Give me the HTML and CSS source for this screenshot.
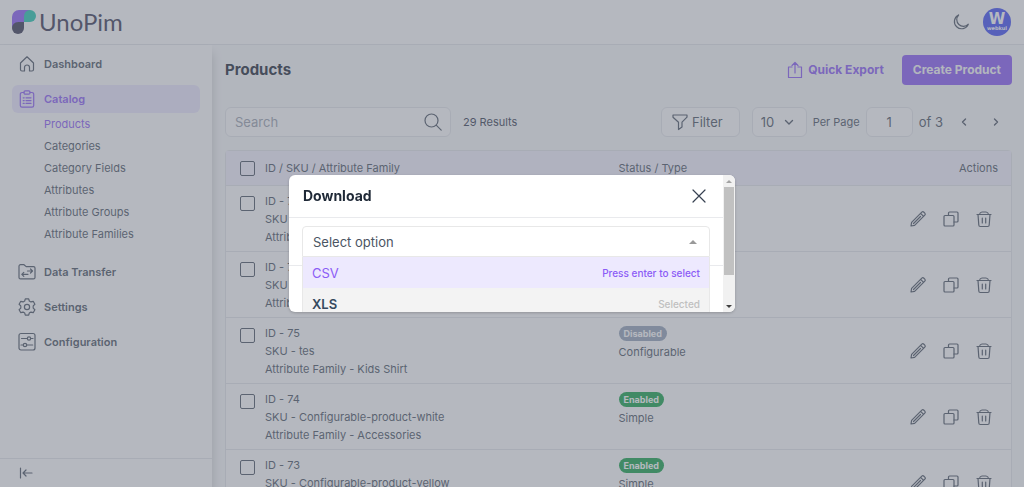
FILE: index.html
```html
<!DOCTYPE html>
<html lang="en">
<head>
<meta charset="utf-8">
<title>Products - UnoPim</title>
<link rel="stylesheet" href="styles.css">
</head>
<body>
<svg class="sprite" aria-hidden="true">
  <symbol id="i-pencil" viewBox="0 0 20 20"><path d="M3 17l.6-3.600L13.800 3.200a1.500 1.500 0 0 1 2.100 0l.9.9a1.500 1.500 0 0 1 0 2.100L6.600 16.400z M12.600 4.400l3 3M5.500 14.500l7-7"/></symbol>
  <symbol id="i-copy" viewBox="0 0 20 20"><rect x="3" y="6.500" width="10" height="10.500" rx="1"/><path d="M7.500 6.500V4a1 1 0 0 1 1-1H16a1 1 0 0 1 1 1v8a1 1 0 0 1-1 1h-3"/></symbol>
  <symbol id="i-trash" viewBox="0 0 20 20"><path d="M3 5.500h14M5.500 5.500a2.800 2.800 0 0 1 2.500-2.500h4a2.800 2.800 0 0 1 2.500 2.500M4 5.500l.8 10.500a1.500 1.500 0 0 0 1.500 1.500h7.400a1.500 1.500 0 0 0 1.500-1.500L16 5.500M8.300 9v5M11.700 9v5"/></symbol>
</svg>

<header class="topbar">
  <a class="brand" href="#">
    <svg class="brand-mark" viewBox="0 0 24 24" aria-hidden="true">
      <path fill="#8b5cf6" d="M0 18V7a7 7 0 0 1 7-7h11v6h-6v6H6z"/>
      <path fill="#25c8b0" d="M12 12V6a6 6 0 1 1 6 6z"/>
      <path fill="#3b3a55" d="M0 18a6 6 0 0 1 6-6h6v6a6 6 0 0 1-12 0z"/>
    </svg>
    <span class="brand-name">UnoPim</span>
  </a>
  <div class="topbar-tools">
    <button class="icon-btn" aria-label="Dark mode">
      <svg class="icon" viewBox="0 0 20 20"><path d="M7.600 3A7.200 7.200 0 1 0 17.300 12.200 6.300 6.300 0 0 1 7.600 3z"/></svg>
    </button>
    <button class="avatar" aria-label="Account"><span class="avatar-mark">W</span><span class="avatar-name">webkul</span></button>
  </div>
</header>

<div class="shell">
  <aside class="sidebar">
    <nav class="menu">
      <a class="menu-item" href="#">
        <svg class="icon" viewBox="0 0 20 20"><path d="M3.500 9L10 2.800 16.500 9v6.500a1.500 1.500 0 0 1-1.500 1.500h-2.500v-3.500a2.500 2.500 0 0 0-5 0V17H5a1.500 1.500 0 0 1-1.500-1.500z"/></svg>
        Dashboard</a>
      <a class="menu-item active" href="#">
        <svg class="icon" viewBox="0 0 20 20"><path d="M7 3.500H5a1.700 1.700 0 0 0-1.700 1.700v11.300A1.700 1.700 0 0 0 5 18.200h10a1.700 1.700 0 0 0 1.700-1.700V5.200A1.700 1.700 0 0 0 15 3.500h-2"/><rect x="7" y="1.800" width="6" height="3.400" rx="1.200"/><path d="M6.200 8.800h1M9 8.800h5M6.200 11.600h1M9 11.600h5M6.200 14.400h1M9 14.400h5"/></svg>
        Catalog</a>
      <div class="submenu">
        <a class="current" href="#">Products</a>
        <a href="#">Categories</a>
        <a href="#">Category Fields</a>
        <a href="#">Attributes</a>
        <a href="#">Attribute Groups</a>
        <a href="#">Attribute Families</a>
      </div>
      <a class="menu-item" href="#">
        <svg class="icon" viewBox="0 0 20 20"><path d="M2 4.200A1.500 1.500 0 0 1 3.500 2.700H7l2.200 1.900h7.300A1.500 1.500 0 0 1 18 6.100v9.300a1.500 1.500 0 0 1-1.500 1.500h-13A1.500 1.500 0 0 1 2 15.400zM10.500 9h5M13.500 7l2 2-2 2M11 12.300H4.800M6.800 10.300l-2 2 2 2"/></svg>
        Data Transfer</a>
      <a class="menu-item" href="#">
        <svg class="icon" viewBox="0 0 20 20"><circle cx="10" cy="10" r="2.600"/><path d="M8.300 1.800h3.400l.6 2.200 1.600.9 2.300-.6 1.700 3-1.700 1.600v2.200l1.700 1.600-1.700 3-2.300-.6-1.600.9-.6 2.200H8.300L7.700 16l-1.600-.9-2.300.6-1.700-3 1.700-1.600V8.900L2.100 7.300l1.700-3 2.300.6L7.700 4z"/></svg>
        Settings</a>
      <a class="menu-item" href="#">
        <svg class="icon" viewBox="0 0 20 20"><rect x="2" y="1.500" width="16" height="16.500" rx="2"/><circle cx="12" cy="6.500" r="1.700"/><circle cx="8" cy="13" r="1.700"/><path d="M4.500 6.500h5.800M13.700 6.500h2.300M4 13h2.300M9.700 13h6"/></svg>
        Configuration</a>
    </nav>
    <div class="sidebar-foot">
      <button class="icon-btn" aria-label="Collapse menu">
        <svg class="icon" viewBox="0 0 20 20"><path d="M4.500 5v10M16 10H7M10 7l-3 3 3 3"/></svg>
      </button>
    </div>
  </aside>

  <main class="content">
    <div class="page-head">
      <h1>Products</h1>
      <div class="page-actions">
        <button class="link-btn">
          <svg class="icon" viewBox="0 0 20 20"><path d="M7 7H3.500v10.500h13V7H13M10 13V2.500M7 5.500l3-3 3 3"/></svg>
          Quick Export</button>
        <button class="primary-btn">Create Product</button>
      </div>
    </div>

    <div class="toolbar">
      <div class="toolbar-side">
        <label class="search">
          <input type="text" placeholder="Search" aria-label="Search">
          <svg class="icon" viewBox="0 0 20 20"><circle cx="8.500" cy="8.500" r="6.500"/><path d="M13.200 13.200l5 5"/></svg>
        </label>
        <span class="results">29 Results</span>
      </div>
      <div class="toolbar-side pager">
        <button class="box-btn filter">
          <svg class="icon" viewBox="0 0 20 20"><path d="M3 3h14v2.200l-5 5V15l-3.500 2.500V10.200L3 5.200z"/></svg>
          Filter</button>
        <span class="per-page">
          <select aria-label="Rows per page" id="rows"><option>10</option></select>
          <svg class="icon small" viewBox="0 0 12 12"><path d="M2.500 4.500L6 8l3.500-3.500"/></svg>
        </span>
        <label class="muted" for="rows">Per Page</label>
        <input class="page-no" type="text" value="1" aria-label="Page">
        <span class="total">of 3</span>
        <button class="icon-btn prev" aria-label="Previous page"><svg class="icon small" viewBox="0 0 12 12"><path d="M7.500 3L4.500 6l3 3"/></svg></button>
        <button class="icon-btn next" aria-label="Next page"><svg class="icon small" viewBox="0 0 12 12"><path d="M4.500 3l3 3-3 3"/></svg></button>
      </div>
    </div>

    <table class="grid">
      <thead>
        <tr>
          <th><div class="entry"><input type="checkbox" aria-label="Select all"><span>ID / SKU / Attribute Family</span></div></th>
          <th>Status / Type</th>
          <th class="actions-head">Actions</th>
        </tr>
      </thead>
      <tbody>
        <tr>
          <td><div class="entry"><input type="checkbox" aria-label="Select 77"><div><p>ID - 77</p><p>SKU</p><p>Attribute</p></div></div></td>
          <td></td>
          <td><div class="actions"><button aria-label="Edit"><svg class="icon"><use href="#i-pencil"/></svg></button><button aria-label="Copy"><svg class="icon"><use href="#i-copy"/></svg></button><button aria-label="Delete"><svg class="icon"><use href="#i-trash"/></svg></button></div></td>
        </tr>
        <tr>
          <td><div class="entry"><input type="checkbox" aria-label="Select 76"><div><p>ID - 76</p><p>SKU</p><p>Attribute</p></div></div></td>
          <td></td>
          <td><div class="actions"><button aria-label="Edit"><svg class="icon"><use href="#i-pencil"/></svg></button><button aria-label="Copy"><svg class="icon"><use href="#i-copy"/></svg></button><button aria-label="Delete"><svg class="icon"><use href="#i-trash"/></svg></button></div></td>
        </tr>
        <tr>
          <td><div class="entry"><input type="checkbox" aria-label="Select 75"><div><p>ID - 75</p><p>SKU - tes</p><p>Attribute Family - Kids Shirt</p></div></div></td>
          <td><span class="badge off">Disabled</span><p>Configurable</p></td>
          <td><div class="actions"><button aria-label="Edit"><svg class="icon"><use href="#i-pencil"/></svg></button><button aria-label="Copy"><svg class="icon"><use href="#i-copy"/></svg></button><button aria-label="Delete"><svg class="icon"><use href="#i-trash"/></svg></button></div></td>
        </tr>
        <tr>
          <td><div class="entry"><input type="checkbox" aria-label="Select 74"><div><p>ID - 74</p><p>SKU - Configurable-product-white</p><p>Attribute Family - Accessories</p></div></div></td>
          <td><span class="badge on">Enabled</span><p>Simple</p></td>
          <td><div class="actions"><button aria-label="Edit"><svg class="icon"><use href="#i-pencil"/></svg></button><button aria-label="Copy"><svg class="icon"><use href="#i-copy"/></svg></button><button aria-label="Delete"><svg class="icon"><use href="#i-trash"/></svg></button></div></td>
        </tr>
        <tr>
          <td><div class="entry"><input type="checkbox" aria-label="Select 73"><div><p>ID - 73</p><p>SKU - Configurable-product-yellow</p></div></div></td>
          <td><span class="badge on">Enabled</span><p>Simple</p></td>
          <td><div class="actions"><button aria-label="Edit"><svg class="icon"><use href="#i-pencil"/></svg></button><button aria-label="Copy"><svg class="icon"><use href="#i-copy"/></svg></button><button aria-label="Delete"><svg class="icon"><use href="#i-trash"/></svg></button></div></td>
        </tr>
      </tbody>
    </table>
  </main>
</div>

<div class="overlay">
  <section class="modal" role="dialog" aria-labelledby="modal-title">
    <div class="modal-scroll">
      <div class="modal-head">
        <h2 id="modal-title">Download</h2>
        <button class="icon-btn close" aria-label="Close"><svg class="icon" viewBox="0 0 20 20"><path d="M4 4l12 12M16 4L4 16"/></svg></button>
      </div>
      <div class="modal-body">
        <div class="picker">
          <button class="picker-toggle" aria-haspopup="listbox" aria-expanded="true">Select option<span class="caret"></span></button>
          <ul class="picker-list" role="listbox">
            <li class="hover" role="option"><span>CSV</span><small>Press enter to select</small></li>
            <li class="selected" role="option" aria-selected="true"><span>XLS</span><small>Selected</small></li>
          </ul>
        </div>
      </div>
    </div>
    <div class="scrollbar" aria-hidden="true">
      <span class="arrow up"></span>
      <span class="track"><span class="thumb"></span></span>
      <span class="arrow down"></span>
    </div>
  </section>
</div>
</body>
</html>
```

FILE: styles.css
```css
* { box-sizing: border-box; }

body {
  margin: 0;
  height: 100vh;
  display: flex;
  flex-direction: column;
  overflow: hidden;
  font: 11px/18px Inter, "Liberation Sans", sans-serif;
  color: #4b5563;
  background: #f9fafb;
}

h1, h2, p, ul { margin: 0; padding: 0; }
a { color: inherit; text-decoration: none; }
button, input, select { font: inherit; color: inherit; }
button { padding: 0; border: 0; background: none; }

.sprite { display: none; }

.icon {
  width: 20px;
  height: 20px;
  flex: none;
  fill: none;
  stroke: currentColor;
  stroke-width: 1.2;
  stroke-linecap: round;
  stroke-linejoin: round;
}
.icon.small { width: 12px; height: 12px; stroke-width: 1.4; }
.icon-btn { display: flex; }

/* Top bar */
.topbar {
  flex: none;
  height: 45px;
  padding: 0 13px 0 12px;
  display: flex;
  align-items: center;
  justify-content: space-between;
  background: #fff;
  border-bottom: 1px solid #e5e7eb;
}
.brand { display: flex; align-items: center; gap: 3px; }
.brand-mark { width: 24px; height: 24px; }
.brand-name { font: 24px/30px Lato, sans-serif; color: #3b3a55; }
.topbar-tools { display: flex; align-items: center; gap: 12px; }
.avatar {
  width: 28px;
  height: 28px;
  border-radius: 50%;
  display: flex;
  flex-direction: column;
  align-items: center;
  justify-content: center;
  background: #4250f5;
  color: #fff;
}
.avatar-mark { font: bold 15px/13px "DejaVu Sans", sans-serif; }
.avatar-name { font: bold 5px/5px "DejaVu Sans", sans-serif; }

/* Layout */
.shell { flex: 1; min-height: 0; display: flex; }
.sidebar {
  flex: none;
  width: 212px;
  display: flex;
  flex-direction: column;
  background: #fff;
  box-shadow: 0 8px 10px rgba(0, 0, 0, .2);
}
.menu {
  flex: 1;
  padding: 5px 12px;
  display: flex;
  flex-direction: column;
  gap: 7px;
}
.menu-item {
  height: 28px;
  padding: 0 5px;
  display: flex;
  align-items: center;
  gap: 7px;
  border-radius: 6px;
  font-weight: 600;
}
.menu-item.active { background: #ede9fe; color: #8b5cf6; }
.submenu {
  margin-top: -7px;
  padding: 0 0 6px 32px;
  display: flex;
  flex-direction: column;
  line-height: 22px;
}
.submenu .current { color: #8b5cf6; }
.sidebar-foot {
  height: 29px;
  padding: 0 16px;
  display: flex;
  align-items: center;
  border-top: 1px solid #e5e7eb;
}

.content { flex: 1; min-width: 0; padding: 10px 12px 0 13px; overflow: hidden; }
.page-head, .toolbar {
  height: 30px;
  display: flex;
  align-items: center;
  justify-content: space-between;
}
h1 { font-size: 15px; line-height: 24px; font-weight: 700; color: #1f2937; }
.page-actions { display: flex; align-items: center; gap: 18px; font-size: 12px; }
.link-btn {
  display: flex;
  align-items: center;
  gap: 3px;
  font-weight: 700;
  color: #8b5cf6;
}
.primary-btn {
  height: 30px;
  padding: 0 11px;
  border-radius: 4px;
  background: #8b5cf6;
  color: #f9fafb;
  font-weight: 700;
}

.toolbar { margin: 22px 0 13px; }
.toolbar-side { display: flex; align-items: center; gap: 12px; }
.search, .box-btn, .per-page, .page-no {
  height: 30px;
  border: 1px solid #e5e7eb;
  border-radius: 6px;
  background: #fff;
}
.search {
  width: 226px;
  padding: 0 7px 0 9px;
  display: flex;
  align-items: center;
}
.search input {
  flex: 1;
  min-width: 0;
  padding: 0;
  border: 0;
  outline: 0;
  background: none;
  font-size: 13px;
}
.search input::placeholder { color: #9ca3af; opacity: 1; }
.results { color: #374151; }
.toolbar .pager { font-size: 13px; gap: 6px; }
.box-btn { display: flex; align-items: center; gap: 2px; }
.filter { padding: 0 16px 0 8px; margin-right: 6px; }
.per-page {
  padding: 0 11px 0 8px;
  display: flex;
  align-items: center;
  gap: 8px;
}
.per-page select {
  appearance: none;
  padding: 0;
  border: 0;
  background: none;
}
.muted { font-size: 11px; }
.page-no { width: 47px; padding: 0; text-align: center; }
.prev { margin: 0 14px 0 9px; }
.next { margin-right: 10px; }

/* Table */
.grid {
  width: 100%;
  table-layout: fixed;
  border-collapse: separate;
  border-spacing: 0;
  border: 1px solid #e5e7eb;
  border-radius: 4px 4px 0 0;
  background: #fff;
}
th {
  height: 35px;
  padding: 0;
  text-align: left;
  font-weight: 400;
  background: #f5f3ff;
  border-bottom: 1px solid #e5e7eb;
}
th:first-child { width: 50%; }
.grid .actions-head { padding-right: 13px; text-align: right; }
td {
  height: 66px;
  padding: 6px 0 5px;
  vertical-align: top;
  border-bottom: 1px solid #e5e7eb;
}
.entry { padding-left: 14px; display: flex; gap: 10px; }
th .entry { align-items: center; }
td .entry input { margin-top: 4px; }
.entry input {
  appearance: none;
  flex: none;
  width: 15px;
  height: 15px;
  margin: 0;
  border: 1px solid #4b5563;
  border-radius: 2px;
}
.badge {
  display: block;
  width: fit-content;
  margin: 2px 0;
  padding: 0 5px;
  border-radius: 8px;
  font-size: 9px;
  line-height: 15px;
  font-weight: 700;
  color: #fff;
}
.badge.on { background: #16a34a; }
.badge.off { background: #94a3b8; }
.actions {
  height: 54px;
  padding-right: 17px;
  display: flex;
  align-items: center;
  justify-content: flex-end;
  gap: 13px;
}
.actions button { display: flex; }

/* Dialog */
.overlay {
  position: fixed;
  inset: 0;
  display: flex;
  align-items: center;
  justify-content: center;
  background: rgba(107, 114, 128, .5);
}
.modal {
  width: 446px;
  max-width: 90%;
  height: 137px;
  display: flex;
  overflow: hidden;
  border-radius: 6px;
  background: #fff;
  box-shadow: 0 1px 3px rgba(0, 0, 0, .2);
}
.modal-scroll { flex: 1; min-width: 0; }
.modal-head {
  height: 43px;
  padding: 0 14px;
  display: flex;
  align-items: center;
  justify-content: space-between;
  border-bottom: 1px solid #e9eaed;
}
h2 { font-size: 14px; line-height: 20px; font-weight: 700; color: #1f2937; }
.close { color: #374151; }
.modal-body { padding: 8px 13px; border-bottom: 1px solid #e9eaed; }
.picker { position: relative; font-size: 13px; }
.picker-toggle {
  width: 100%;
  height: 31px;
  padding: 0 12px 0 10px;
  display: flex;
  align-items: center;
  justify-content: space-between;
  border: 1px solid #e8e8e8;
  border-radius: 4px 4px 0 0;
  background: #fff;
}
.caret {
  border: 4px solid transparent;
  border-top: 0;
  border-bottom-color: #999;
}
.picker-list {
  position: absolute;
  top: 100%;
  left: 0;
  right: 0;
  list-style: none;
  border: 1px solid #e8e8e8;
  border-top: 0;
}
.picker-list li {
  height: 31px;
  padding: 0 9px;
  display: flex;
  align-items: center;
  justify-content: space-between;
}
.picker-list small { font-size: 10px; font-weight: 500; }
.picker-list .hover { background: #ede9fe; color: #8b5cf6; }
.picker-list .selected { background: #f3f3f3; color: #35495e; font-weight: 600; }
.picker-list .selected small { color: #c0c0c0; }

.scrollbar {
  flex: none;
  width: 12px;
  display: flex;
  flex-direction: column;
  background: #f1f1f1;
}
.track { flex: 1; padding: 0 1px; }
.thumb { display: block; height: 78%; background: #c1c1c1; }
.arrow { height: 12px; display: flex; align-items: center; justify-content: center; }
.arrow::before { content: ""; border: 3px solid transparent; }
.arrow.up::before { border-top: 0; border-bottom-color: #a3a3a3; }
.arrow.down::before { border-bottom: 0; border-top-color: #404040; }
```
